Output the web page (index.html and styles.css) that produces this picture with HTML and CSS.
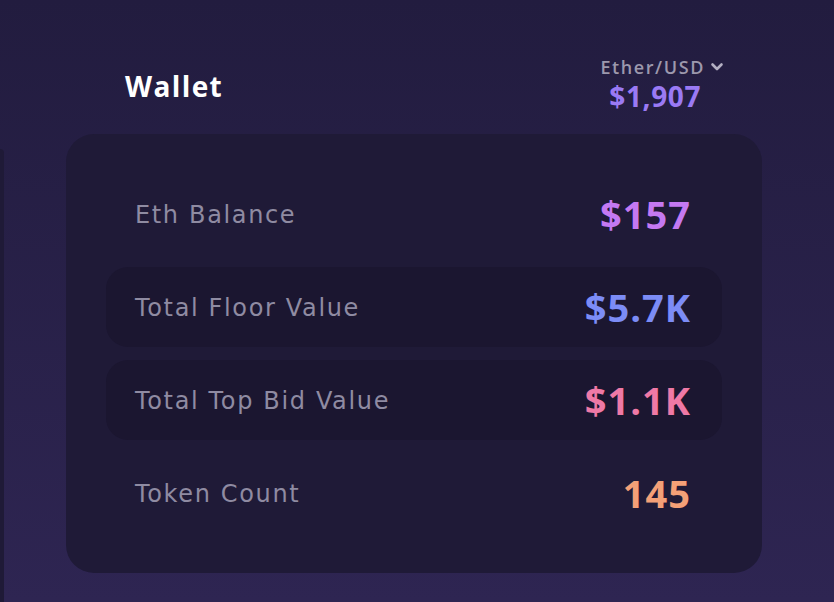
FILE: index.html
```html
<!DOCTYPE html>
<html lang="en">
<head>
<meta charset="utf-8">
<title>Wallet</title>
<link rel="stylesheet" href="styles.css">
</head>
<body>
<div class="layout">
  <aside class="side-panel"></aside>
  <main class="main">
    <header class="header">
      <h1 class="title">Wallet</h1>
      <div class="rate">
        <div class="rate-pair">Ether/USD
          <svg class="chev" width="14" height="10" viewBox="0 0 14 10"><path d="M2.5 2.5 L7 7 L11.5 2.5" fill="none" stroke="currentColor" stroke-width="2.6" stroke-linecap="round" stroke-linejoin="round"/></svg>
        </div>
        <div class="rate-value">$1,907</div>
      </div>
    </header>
    <section class="card">
      <div class="row">
        <span class="label">Eth Balance</span>
        <span class="value v-purple">$157</span>
      </div>
      <div class="row row-boxed">
        <span class="label">Total Floor Value</span>
        <span class="value v-blue">$5.7K</span>
      </div>
      <div class="row row-boxed">
        <span class="label">Total Top Bid Value</span>
        <span class="value v-pink">$1.1K</span>
      </div>
      <div class="row">
        <span class="label">Token Count</span>
        <span class="value v-orange">145</span>
      </div>
    </section>
  </main>
</div>
</body>
</html>
```
FILE: styles.css
```css
html, body {
  margin: 0;
  padding: 0;
  height: 100%;
}
body {
  background: linear-gradient(180deg, #221c3f 0%, #2e2552 100%);
  font-family: "Open Sans", "Noto Sans", sans-serif;
  overflow: hidden;
}
.layout {
  display: flex;
  height: 602px;
}
.side-panel {
  width: 4px;
  margin-top: 149px;
  background: #1f1a37;
  border-top-right-radius: 4px;
  flex: none;
}
.main {
  padding-left: 62px;
  padding-top: 56px;
  width: 696px;
}
.header {
  display: flex;
  justify-content: space-between;
  align-items: center;
  padding: 0 38px 0 59px;
  height: 57px;
}
.title {
  margin: 0;
  color: #ffffff;
  font-size: 28px;
  font-weight: 700;
  letter-spacing: 1.4px;
  position: relative;
  top: 1px;
}
.rate {
  display: flex;
  flex-direction: column;
  align-items: center;
}
.rate-pair {
  color: #9c98ad;
  font-size: 18px;
  font-weight: 600;
  line-height: 20px;
  display: flex;
  align-items: center;
  gap: 5px;
  letter-spacing: 1.6px;
}
.chev {
  color: #b3afc2;
}
.rate-value {
  color: #9a7af4;
  font-size: 28px;
  font-weight: 700;
  line-height: 36px;
  margin-left: -14px;
  letter-spacing: 0.6px;
  position: relative;
  top: 1px;
}
.card {
  margin-top: 21px;
  background: #1f1a37;
  border-radius: 28px;
  padding: 40px;
  display: flex;
  flex-direction: column;
  gap: 13px;
}
.row {
  height: 80px;
  display: flex;
  align-items: center;
  justify-content: space-between;
  padding: 0 31px 0 29px;
  border-radius: 22px;
}
.row-boxed {
  background: #1b1630;
}
.label {
  color: #8f8ba2;
  font-family: "DejaVu Sans", "Open Sans", sans-serif;
  font-size: 24px;
  letter-spacing: 1.65px;
  position: relative;
  top: 1px;
}
.value {
  font-size: 38px;
  font-weight: 700;
  letter-spacing: 1px;
}
.v-purple { color: #c479f2; }
.v-blue { color: #7c8cf6; }
.v-pink { color: #ef79a6; }
.v-orange { color: #f4a077; }
```
